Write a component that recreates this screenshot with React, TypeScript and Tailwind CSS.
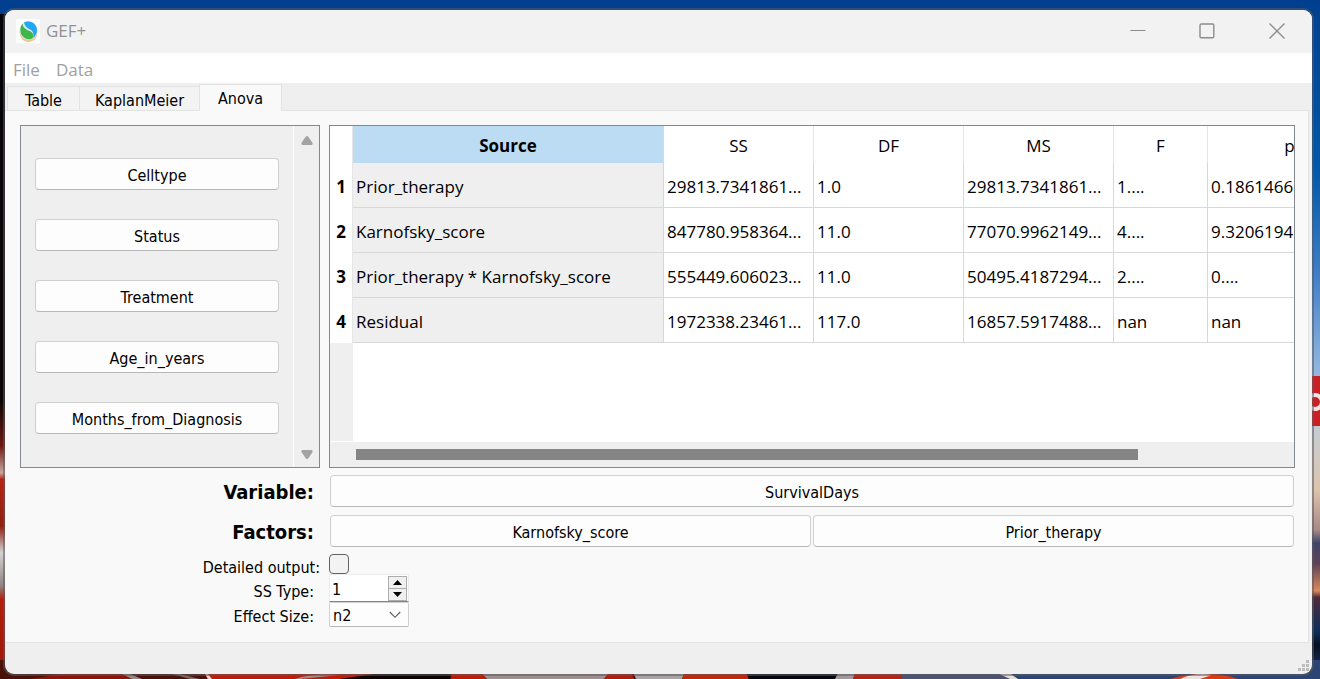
import { useState } from "react";
import type { ReactNode } from "react";

const candidates = ["Celltype", "Status", "Treatment", "Age_in_years", "Months_from_Diagnosis"];

const columns = ["SS", "DF", "MS", "F", "p"];

const rows = [
  { source: "Prior_therapy", values: ["29813.7341861...", "1.0", "29813.7341861...", "1....", "0.1861466"] },
  { source: "Karnofsky_score", values: ["847780.958364...", "11.0", "77070.9962149...", "4....", "9.3206194"] },
  { source: "Prior_therapy * Karnofsky_score", values: ["555449.606023...", "11.0", "50495.4187294...", "2....", "0...."] },
  { source: "Residual", values: ["1972338.23461...", "117.0", "16857.5917488...", "nan", "nan"] },
];

function PushButton({ children }: { children: ReactNode }) {
  return (
    <button
      type="button"
      className="h-8 w-full min-w-0 rounded border border-[#d0d0d0] border-b-[#b8b8b8] bg-[#fdfdfd] px-2 pt-1 text-center"
    >
      {children}
    </button>
  );
}

function Wallpaper() {
  return (
    <svg
      className="absolute inset-0 h-full w-full"
      viewBox="0 0 1320 679"
      preserveAspectRatio="none"
      aria-hidden="true"
    >
      <defs>
        <linearGradient id="sky" x1="0" y1="0" x2="0" y2="1">
          <stop offset="0" stopColor="#003f8f" />
          <stop offset="0.25" stopColor="#0058a8" />
          <stop offset="0.4" stopColor="#3f7cc4" />
          <stop offset="0.54" stopColor="#8fb4dd" />
          <stop offset="0.64" stopColor="#c9ccd0" />
          <stop offset="0.72" stopColor="#dcc5ae" />
          <stop offset="0.78" stopColor="#a88a86" />
          <stop offset="0.8" stopColor="#3c4468" />
          <stop offset="0.83" stopColor="#5c4355" />
          <stop offset="0.87" stopColor="#d98a5c" />
          <stop offset="0.88" stopColor="#4d2b3a" />
          <stop offset="0.93" stopColor="#0d2c5a" />
          <stop offset="0.95" stopColor="#071022" />
          <stop offset="1" stopColor="#1f3a6a" />
        </linearGradient>
        <linearGradient id="left" x1="0" y1="0" x2="0" y2="1">
          <stop offset="0" stopColor="#050307" />
          <stop offset="0.58" stopColor="#0b0405" />
          <stop offset="0.65" stopColor="#6e1a12" />
          <stop offset="0.69" stopColor="#c9a8a2" />
          <stop offset="0.7" stopColor="#b52413" />
          <stop offset="0.77" stopColor="#8d2012" />
          <stop offset="0.81" stopColor="#d5d2d2" />
          <stop offset="0.86" stopColor="#8f8582" />
          <stop offset="0.88" stopColor="#b11f0c" />
          <stop offset="1" stopColor="#9c1608" />
        </linearGradient>
      </defs>
      <rect width="1320" height="679" fill="#003f8f" />
      <rect y="14" width="20" height="665" fill="url(#left)" />
      <rect x="1300" width="20" height="679" fill="url(#sky)" />
      <rect x="1300" y="376" width="20" height="50" fill="#c92026" />
      <circle cx="1315" cy="402" r="7" fill="#c92026" stroke="#f2e6e4" strokeWidth="4" />
      <rect x="0" y="660" width="1300" height="19" fill="#4a100a" />
      <path d="M30 679L60 674H120L135 679Z" fill="#8c1509" />
      <path d="M122 674L132 679H142L130 674Z" fill="#9a8682" />
      <path d="M172 674L190 679H200L180 674Z" fill="#7d6660" />
      <path d="M207 679L202 660H375V674L340 679Z" fill="#bd1c0b" />
      <path d="M205 674L208 679H212L208 674Z" fill="#e3d5d0" />
      <path d="M295 679Q310 673 340 675L300 679Z" fill="#a08a86" />
      <path d="M340 679L375 674V660H452L450 679Z" fill="#0d0303" />
      <path d="M452 660L451 679H487L470 660Z" fill="#bf1c06" />
      <path d="M470 660L487 679H604L620 660Z" fill="#9d8f8e" />
      <path d="M620 660L604 679H634L625 660Z" fill="#b01d0a" />
      <path d="M628 660L636 679H682L690 660Z" fill="#a9a3a3" />
      <path d="M690 660L682 679H749L740 660Z" fill="#c1270b" />
      <path d="M740 660L749 679H835L845 660Z" fill="#07070f" />
      <path d="M845 660L835 679H853L860 660Z" fill="#a29a9c" />
      <path d="M860 660L853 679H902V660Z" fill="#b52514" />
      <path d="M902 660H1320V679H902Z" fill="#2b4473" />
      <path d="M902 660H995L1010 679H902Z" fill="#4b5370" />
      <path d="M995 672L1010 679H1018L1008 672Z" fill="#e7dcd8" />
      <path d="M1170 679Q1208 668 1238 679Z" fill="#dd3a16" />
      <path d="M1180 679Q1195 672 1212 675L1200 679Z" fill="#ece2de" />
    </svg>
  );
}

function AppIcon() {
  return (
    <svg className="h-6 w-6 shrink-0 bg-white" viewBox="0 0 24 24" aria-hidden="true">
      <ellipse cx="12.5" cy="13" rx="9" ry="10.2" fill="#f3c58a" />
      <ellipse cx="12.5" cy="11.5" rx="8.6" ry="9.7" fill="#d3ece6" />
      <path d="M8 3.500C13 0.500 21 4 21 11C21 14.500 19.500 17 17 19C18 14.500 17 12 14 10.500C11 9 8.500 7 8 3.500Z" fill="#22a7f0" />
      <path d="M6.500 4.500C3.800 8 3.800 13 6 16.500C8.500 20.300 14 21.300 16.700 19C17.800 15.500 17 13.500 13.500 12C10 10.500 6.800 8.500 6.500 4.500Z" fill="#3fb54a" />
    </svg>
  );
}

export default function App() {
  const [ssType, setSsType] = useState(1);

  return (
    <div className="relative flex h-screen min-h-[560px] flex-col pt-[10px] pr-2 pb-[5px] pl-[5px] font-['DejaVu_Sans_Condensed','DejaVu_Sans',sans-serif] text-base leading-5 text-black">
      <Wallpaper />
      <div className="relative flex min-h-0 flex-1 flex-col overflow-hidden rounded-[9px] bg-[#efefef] shadow-[0_0_0_2px_rgba(90,90,95,0.55)]">
        <header className="flex h-[43px] shrink-0 items-center bg-[#f2f2f2] pb-0.5 pl-[11px]">
          <AppIcon />
          <h1 className="ml-1.5 flex-1 font-['Open_Sans',sans-serif] text-[17px] text-[#929292]">GEF+</h1>
          <div className="flex h-full text-[#8c8c8c]">
            <button type="button" aria-label="Minimize" className="flex w-[69px] items-center justify-center">
              <svg width="16" height="16" viewBox="0 0 16 16" fill="none" stroke="currentColor">
                <path d="M0.500 7.500H15.500" />
              </svg>
            </button>
            <button type="button" aria-label="Maximize" className="flex w-[70px] items-center justify-center">
              <svg width="16" height="16" viewBox="0 0 16 16" fill="none" stroke="currentColor" strokeWidth="1.400">
                <rect x="1" y="1" width="13.800" height="13.800" rx="1.200" />
              </svg>
            </button>
            <button type="button" aria-label="Close" className="flex w-[70px] items-center justify-center">
              <svg width="16" height="16" viewBox="0 0 16 16" fill="none" stroke="currentColor" strokeWidth="1.300">
                <path d="M0.500 0.500L15.500 15.500M15.500 0.500L0.500 15.500" />
              </svg>
            </button>
          </div>
        </header>

        <nav className="flex h-[30px] shrink-0 items-center gap-4 bg-white pt-1 pl-2 font-['Open_Sans',sans-serif] text-[17px] text-[#a0a0a0]">
          <button type="button">File</button>
          <button type="button">Data</button>
        </nav>

        <div role="tablist" className="z-10 -mb-px flex h-7 shrink-0 items-end pl-0.5">
          <button type="button" role="tab" aria-selected="false" className="h-[25px] w-[72px] border border-r-0 border-[#e3e3e3] bg-[#f3f3f3] pt-1">
            Table
          </button>
          <button type="button" role="tab" aria-selected="false" className="h-[25px] w-[120px] border border-r-0 border-[#e3e3e3] bg-[#f3f3f3] pt-1">
            KaplanMeier
          </button>
          <button type="button" role="tab" aria-selected="true" className="h-[27px] w-[83px] border border-b-0 border-[#e3e3e3] bg-[#f9f9f9] pt-px">
            Anova
          </button>
        </div>

        <main className="mr-[3px] flex min-h-0 flex-1 flex-col border-y border-r border-[#e3e3e3] bg-[#f9f9f9] pt-3.5 pr-[13px] pb-[15px] pl-[15px]">
          <div className="flex min-h-0 flex-1 gap-[9px]">
            <section aria-label="Columns" className="flex w-[300px] shrink-0 border border-[#828790] bg-[#efefef]">
              <div className="flex min-w-0 flex-1 flex-col gap-[29px] overflow-hidden pt-8 pr-3.5 pl-3.5">
                {candidates.map((name) => (
                  <div key={name} className="shrink-0">
                    <PushButton>{name}</PushButton>
                  </div>
                ))}
              </div>
              <div className="flex w-[26px] flex-col items-center justify-between border-l border-white pt-2 pb-1.5 text-[#a3a3a3]">
                <button type="button" aria-label="Scroll up">
                  <svg width="12" height="13" viewBox="0 0 12 13" fill="currentColor">
                    <path d="M4.500 3Q6 1 7.500 3L11.600 9Q11.900 11 10.500 11H1.500Q0.100 11 0.400 9Z" />
                  </svg>
                </button>
                <button type="button" aria-label="Scroll down">
                  <svg width="12" height="13" viewBox="0 0 12 13" fill="currentColor">
                    <path d="M4.500 10Q6 12 7.500 10L11.600 4Q11.900 2 10.500 2H1.500Q0.100 2 0.400 4Z" />
                  </svg>
                </button>
              </div>
            </section>

            <section aria-label="Results" className="flex min-w-0 flex-1 flex-col border border-[#828790] bg-white">
              <div className="flex min-h-0 flex-1 flex-col overflow-hidden">
                <table className="w-[1042px] shrink-0 table-fixed border-separate border-spacing-0 font-['Open_Sans',sans-serif] text-[17px] leading-6">
                  <colgroup>
                    <col className="w-[23px]" />
                    <col className="w-[311px]" />
                    <col className="w-[150px]" />
                    <col className="w-[150px]" />
                    <col className="w-[150px]" />
                    <col className="w-[94px]" />
                    <col className="w-[164px]" />
                  </colgroup>
                  <thead>
                    <tr className="h-[37px]">
                      <td className="border-r border-[#e5e5e5] p-0" />
                      <th scope="col" className="border-r border-[#d8d8d8] bg-[#bbdcf3] p-0 pt-0.5 font-bold">Source</th>
                      {columns.map((name) => (
                        <th key={name} scope="col" className="border-r border-[#e5e5e5] p-0 pt-0.5 font-normal">
                          {name}
                        </th>
                      ))}
                    </tr>
                  </thead>
                  <tbody>
                    {rows.map((row, index) => (
                      <tr key={row.source} className="h-[45px]">
                        <th scope="row" className="border-r border-[#e5e5e5] p-0 pt-0.5 font-bold">{index + 1}</th>
                        <td className="border-r border-b border-[#d8d8d8] bg-[#efefef] p-0 pt-1 pl-[3px]">{row.source}</td>
                        {row.values.map((value, column) => (
                          <td
                            key={columns[column]}
                            className="overflow-hidden border-r border-b border-[#d8d8d8] p-0 pt-1 pl-[3px] whitespace-nowrap"
                          >
                            {value}
                          </td>
                        ))}
                      </tr>
                    ))}
                  </tbody>
                </table>
                <div className="w-[23px] flex-1 bg-[#efefef]" />
              </div>
              <div className="mt-px flex h-[25px] shrink-0 items-center bg-[#efefef] pl-[26px]">
                <div className="h-[11px] w-5/6 bg-[#858585]" />
              </div>
            </section>
          </div>

          <div className="mt-[7px] grid grid-cols-[300px_minmax(0,1fr)] items-center gap-x-[10px] gap-y-2">
            <h2 className="pt-0.5 pr-1.5 text-right text-[20px] font-bold">Variable:</h2>
            <div className="pr-px">
              <PushButton>SurvivalDays</PushButton>
            </div>
            <h2 className="pt-0.5 pr-1.5 text-right text-[20px] font-bold">Factors:</h2>
            <div className="flex gap-0.5 pr-px">
              <PushButton>Karnofsky_score</PushButton>
              <PushButton>Prior_therapy</PushButton>
            </div>
          </div>

          <div className="mt-[7px] grid grid-cols-[300px_80px] grid-rows-[20px_28px_25px] gap-x-[9px]">
            <label htmlFor="detailed" className="pt-1 text-right">Detailed output:</label>
            <input
              id="detailed"
              type="checkbox"
              className="h-5 w-5 appearance-none rounded border border-[#626262] bg-[#f3f3f3] checked:bg-[#0067c0]"
            />
            <label htmlFor="ss-type" className="pt-2 pr-1.5 text-right">SS Type:</label>
            <div className="flex h-7 border border-[#ececec] border-b-[#868686] bg-white pt-px pr-px">
              <input
                id="ss-type"
                type="number"
                value={ssType}
                onChange={(event) => setSsType(Number(event.target.value))}
                className="min-w-0 flex-1 pt-0.5 pl-0.5 [appearance:textfield] outline-none [&::-webkit-inner-spin-button]:appearance-none"
              />
              <div className="flex w-[19px] flex-col border border-[#adadad] bg-[#f0f0f0]">
                <button
                  type="button"
                  aria-label="Increase"
                  onClick={() => setSsType(ssType + 1)}
                  className="flex flex-1 items-center justify-center border-b border-[#adadad]"
                >
                  <svg width="9" height="5" viewBox="0 0 9 5"><path d="M0 5L4.500 0L9 5Z" /></svg>
                </button>
                <button
                  type="button"
                  aria-label="Decrease"
                  onClick={() => setSsType(ssType - 1)}
                  className="flex flex-1 items-center justify-center"
                >
                  <svg width="9" height="5" viewBox="0 0 9 5"><path d="M0 0L4.500 5L9 0Z" /></svg>
                </button>
              </div>
            </div>
            <label htmlFor="effect-size" className="pt-[5px] pr-1.5 text-right">Effect Size:</label>
            <div className="relative">
              <select
                id="effect-size"
                className="h-[25px] w-full appearance-none rounded-xs border border-[#d0d0d0] border-b-[#b8b8b8] bg-[#fdfdfd] pt-0.5 pl-[3px]"
              >
                <option>n2</option>
                <option>np2</option>
              </select>
              <svg
                className="pointer-events-none absolute top-[9px] right-2"
                width="12"
                height="8"
                viewBox="0 0 12 8"
                fill="none"
                stroke="#5a5a5a"
                strokeWidth="1.100"
              >
                <path d="M0.800 1L6 6.300L11.200 1" />
              </svg>
            </div>
          </div>
        </main>

        <footer className="flex h-[31px] shrink-0 items-end justify-end pr-[3px] pb-0.5">
          <svg width="11" height="12" viewBox="0 0 11 12" fill="#bdbdbd" aria-hidden="true">
            <path d="M8 0h3v3h-3zM4 4h3v3h-3zM8 4h3v3h-3zM0 8h3v3h-3zM4 8h3v3h-3zM8 8h3v3h-3z" />
          </svg>
        </footer>
      </div>
    </div>
  );
}
